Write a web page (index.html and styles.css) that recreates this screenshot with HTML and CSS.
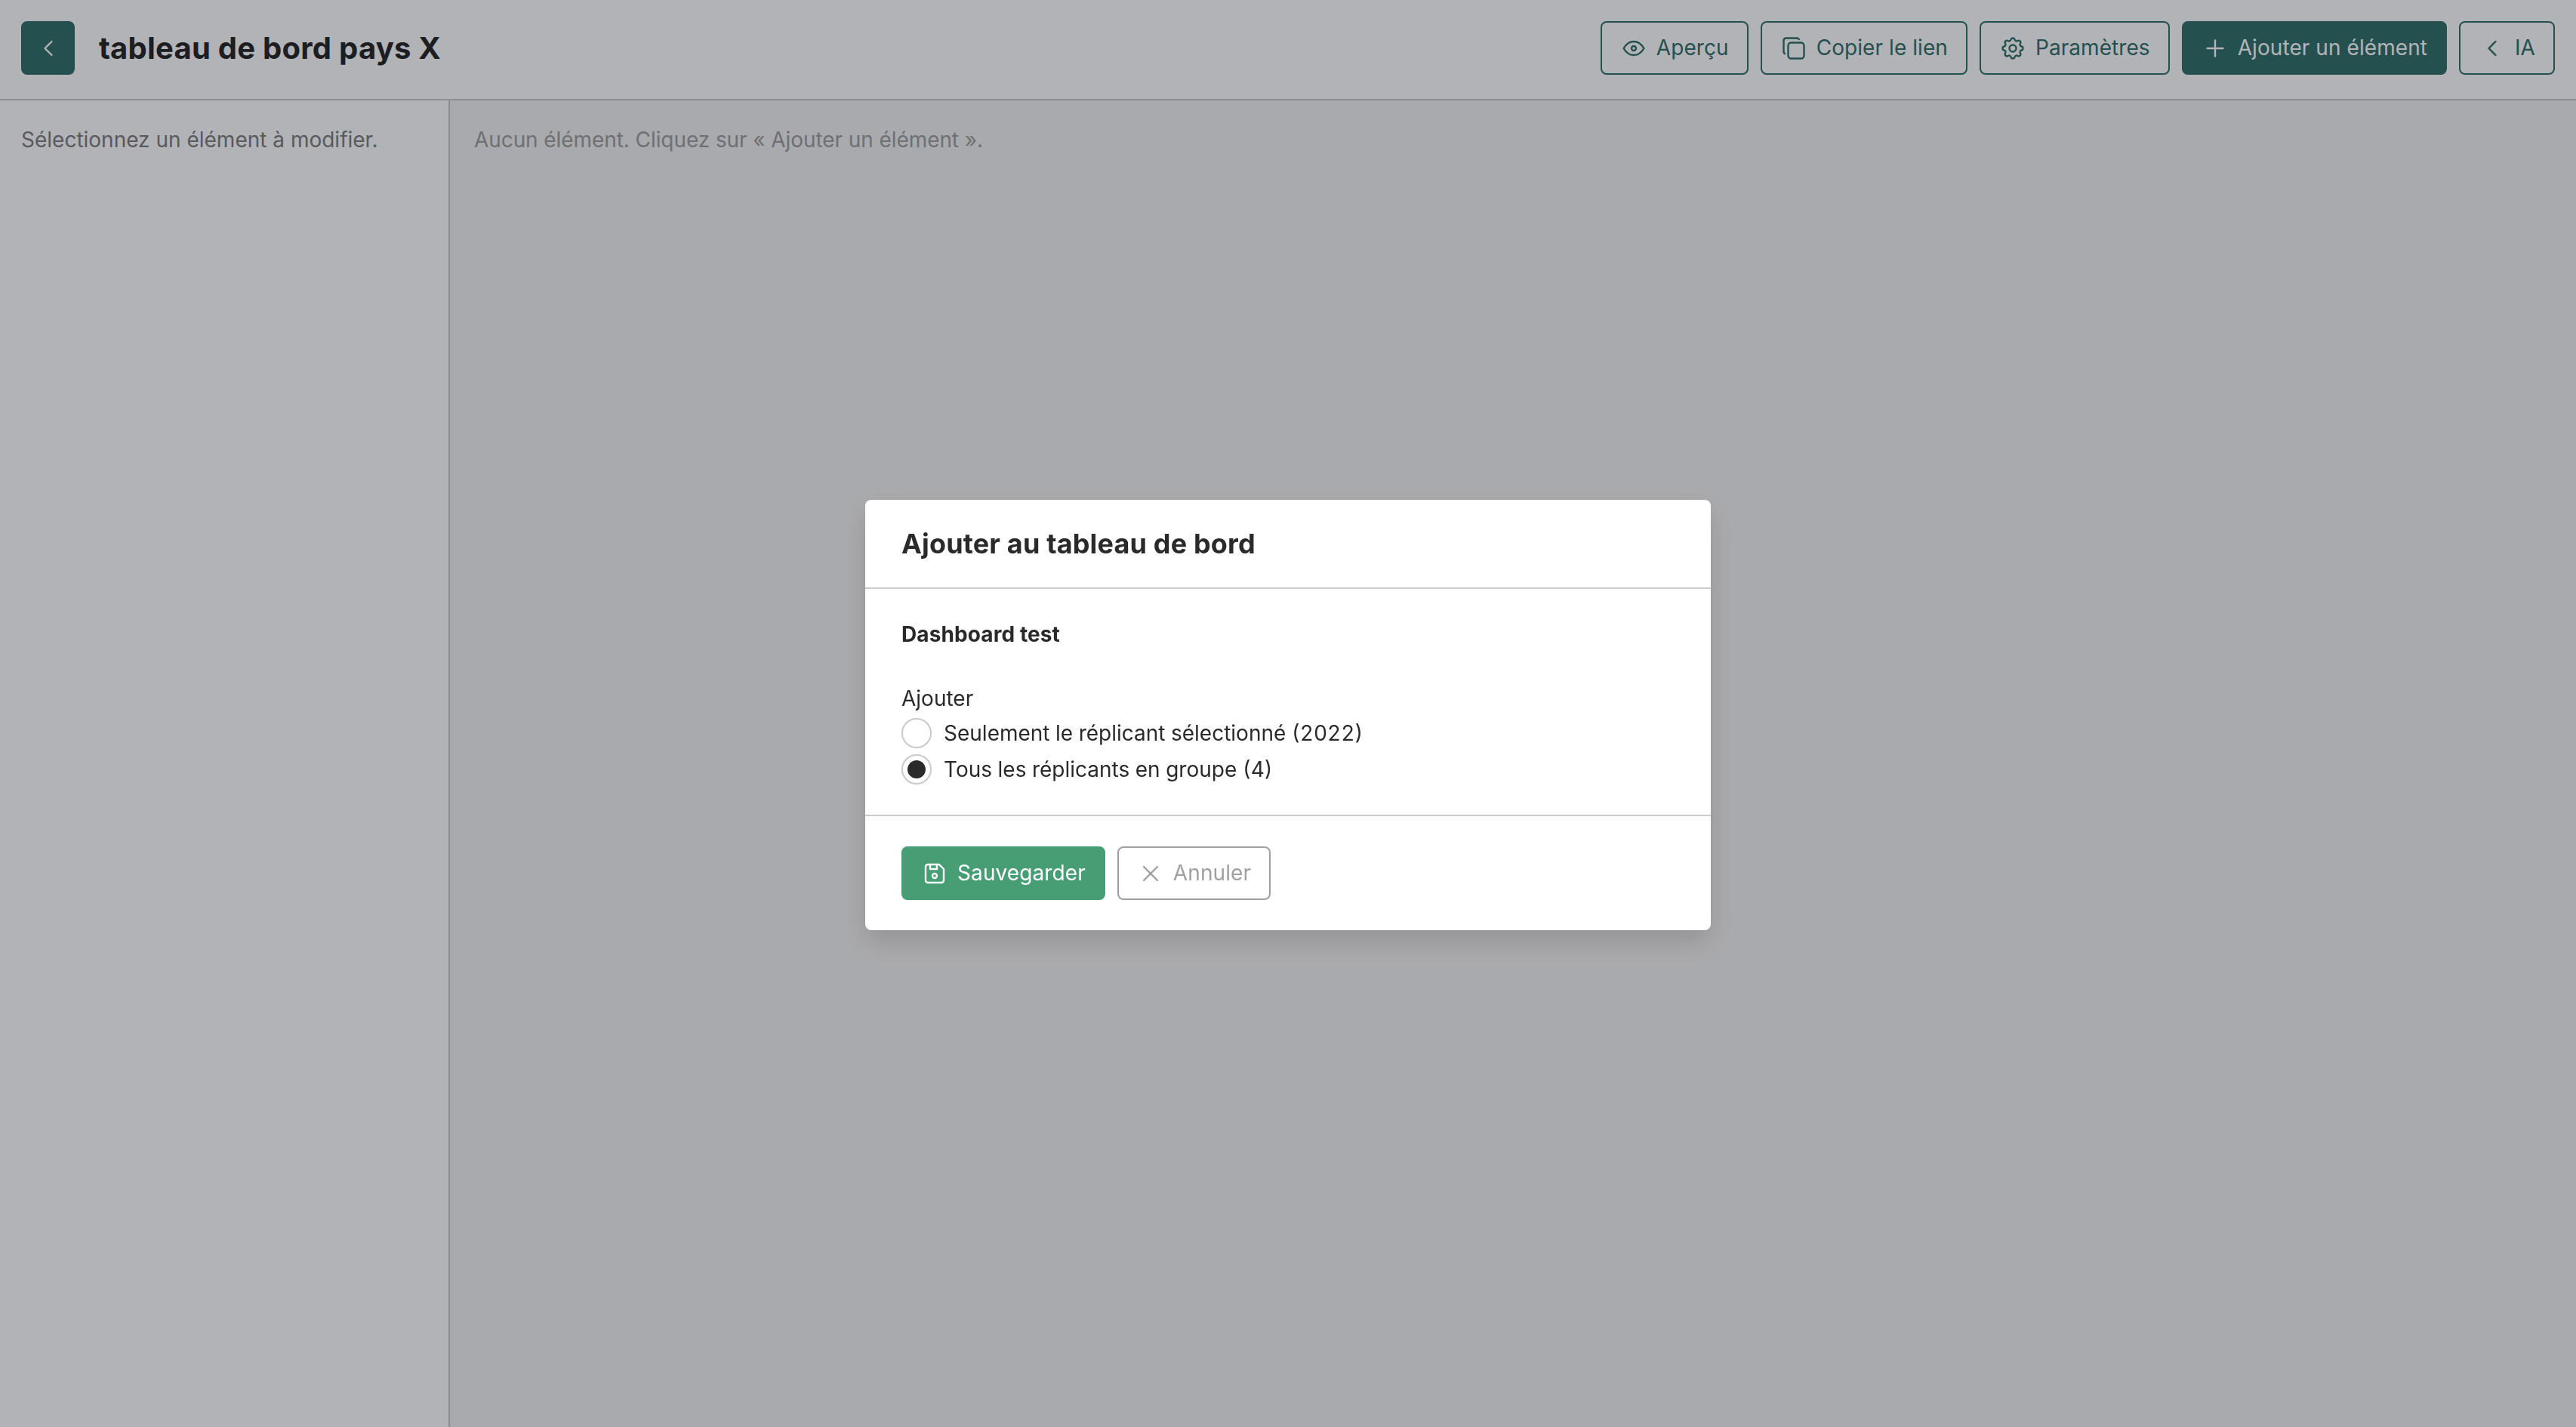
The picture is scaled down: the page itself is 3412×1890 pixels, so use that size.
FILE: index.html
```html
<!DOCTYPE html>
<html lang="fr">
<head>
    <meta charset="UTF-8">
    <meta name="viewport" content="width=device-width, initial-scale=1.0">
    <title>tableau de bord pays X</title>
    <link rel="stylesheet" href="styles.css">
</head>
<body>
    <div class="page">
        <header class="header">
            <button class="btn btn-primary btn-square" aria-label="Retour">
                <svg class="icon" viewBox="0 0 24 24"><path d="M15 6l-6 6l6 6"/></svg>
            </button>
            <h1>tableau de bord pays X</h1>
            <div class="actions">
                <button class="btn btn-outline">
                    <svg class="icon" viewBox="0 0 24 24">
                        <path d="M10 12a2 2 0 1 0 4 0a2 2 0 0 0 -4 0"/>
                        <path d="M21 12c-2.4 4 -5.4 6 -9 6c-3.6 0 -6.6 -2 -9 -6c2.4 -4 5.4 -6 9 -6c3.6 0 6.6 2 9 6"/>
                    </svg>
                    Aperçu
                </button>
                <button class="btn btn-outline">
                    <svg class="icon" viewBox="0 0 24 24">
                        <path d="M7 9.667a2.667 2.667 0 0 1 2.667 -2.667h8.666a2.667 2.667 0 0 1 2.667 2.667v8.666a2.667 2.667 0 0 1 -2.667 2.667h-8.666a2.667 2.667 0 0 1 -2.667 -2.667z"/>
                        <path d="M4.012 16.737a2.005 2.005 0 0 1 -1.012 -1.737v-10c0 -1.1 .9 -2 2 -2h10c.75 0 1.158 .385 1.5 1"/>
                    </svg>
                    Copier le lien
                </button>
                <button class="btn btn-outline">
                    <svg class="icon" viewBox="0 0 24 24">
                        <path d="M10.325 4.317c.426 -1.756 2.924 -1.756 3.35 0a1.724 1.724 0 0 0 2.573 1.066c1.543 -.94 3.31 .826 2.37 2.37a1.724 1.724 0 0 0 1.065 2.572c1.756 .426 1.756 2.924 0 3.35a1.724 1.724 0 0 0 -1.066 2.573c.94 1.543 -.826 3.31 -2.37 2.37a1.724 1.724 0 0 0 -2.572 1.065c-.426 1.756 -2.924 1.756 -3.35 0a1.724 1.724 0 0 0 -2.573 -1.066c-1.543 .94 -3.31 -.826 -2.37 -2.37a1.724 1.724 0 0 0 -1.065 -2.572c-1.756 -.426 -1.756 -2.924 0 -3.35a1.724 1.724 0 0 0 1.066 -2.573c-.94 -1.543 .826 -3.31 2.37 -2.37c1 .608 2.296 .07 2.572 -1.065"/>
                        <path d="M9 12a3 3 0 1 0 6 0a3 3 0 0 0 -6 0"/>
                    </svg>
                    Paramètres
                </button>
                <button class="btn btn-primary">
                    <svg class="icon" viewBox="0 0 24 24"><path d="M12 5v14M5 12h14"/></svg>
                    Ajouter un élément
                </button>
                <button class="btn btn-outline">
                    <svg class="icon" viewBox="0 0 24 24"><path d="M15 6l-6 6l6 6"/></svg>
                    IA
                </button>
            </div>
        </header>

        <div class="main">
            <aside class="sidebar">Sélectionnez un élément à modifier.</aside>
            <main class="content">Aucun élément. Cliquez sur « Ajouter un élément ».</main>
        </div>
    </div>

    <div class="overlay">
        <div class="modal" role="dialog">
            <div class="modal-header">
                <h2>Ajouter au tableau de bord</h2>
            </div>
            <div class="modal-body">
                <div class="item-name">Dashboard test</div>
                <div class="field-label">Ajouter</div>
                <div class="radio-group">
                    <label class="radio">
                        <input type="radio" name="mode">
                        Seulement le réplicant sélectionné (2022)
                    </label>
                    <label class="radio">
                        <input type="radio" name="mode" checked>
                        Tous les réplicants en groupe (4)
                    </label>
                </div>
            </div>
            <div class="modal-footer">
                <button class="btn btn-success">
                    <svg class="icon" viewBox="0 0 24 24">
                        <path d="M6 4h10l4 4v10a2 2 0 0 1 -2 2h-12a2 2 0 0 1 -2 -2v-12a2 2 0 0 1 2 -2"/>
                        <path d="M10 14a2 2 0 1 0 4 0a2 2 0 1 0 -4 0"/>
                        <path d="M14 4v4h-6v-4"/>
                    </svg>
                    Sauvegarder
                </button>
                <button class="btn btn-neutral">
                    <svg class="icon" viewBox="0 0 24 24"><path d="M18 6l-12 12M6 6l12 12"/></svg>
                    Annuler
                </button>
            </div>
        </div>
    </div>
</body>
</html>
```
FILE: styles.css
```css
* {
    box-sizing: border-box;
}
body {
    margin: 0;
    font-family: Inter, sans-serif;
    font-size: 28px;
    line-height: 1.4;
    color: #2a2a2a;
    background-color: #fff;
}
h1, h2 {
    margin: 0;
    font-weight: 700;
    line-height: 1;
}
.page {
    display: flex;
    flex-direction: column;
    height: 100vh;
}
.header {
    display: flex;
    align-items: center;
    height: 133px;
    padding: 28px 28px 32px;
    border-bottom: 2px solid #cacaca;
}
h1 {
    margin-left: 32px;
    font-size: 40px;
    letter-spacing: 0.24px;
}
.actions {
    display: flex;
    gap: 16px;
    margin-left: auto;
}
.main {
    display: flex;
    flex: 1;
}
.sidebar {
    width: 596px;
    padding: 33px 28px;
    border-right: 2px solid #cacaca;
    color: #808080;
}
.content {
    flex: 1;
    padding: 33px 32px;
    background-color: #f2f2f2;
    color: #a0a0a0;
    letter-spacing: -0.08px;
}

/* buttons */
.btn {
    display: flex;
    align-items: center;
    gap: 12px;
    height: 71px;
    padding: 1px 24px 0;
    border: 2px solid transparent;
    border-radius: 8px;
    background-color: transparent;
    font: inherit;
    letter-spacing: 0.07px;
    white-space: nowrap;
}
.btn-square {
    justify-content: center;
    width: 71px;
    padding: 1px 0 0;
}
.btn-primary {
    background-color: #35726d;
    border-color: #35726d;
    color: #fff;
}
.btn-outline {
    border-color: #35726d;
    color: #35726d;
}
.btn-success {
    background-color: #479e74;
    border-color: #479e74;
    color: #fff;
}
.btn-neutral {
    border-color: #a0a0a0;
    color: #a0a0a0;
}
.icon {
    flex: none;
    width: 36px;
    height: 36px;
    fill: none;
    stroke: currentColor;
    stroke-width: 1.6;
    stroke-linecap: round;
    stroke-linejoin: round;
}

/* modal */
.overlay {
    position: fixed;
    inset: 0;
    display: flex;
    align-items: center;
    justify-content: center;
    padding-top: 4px;
    background-color: rgba(0, 4, 14, 0.3);
}
.modal {
    width: 1120px;
    border-radius: 8px;
    background-color: #fff;
    box-shadow: 0 16px 34px -4px rgba(0, 0, 0, 0.15);
}
.modal-header {
    padding: 40px 48px;
    border-bottom: 2px solid #cacaca;
}
.modal-header h2 {
    font-size: 36px;
    letter-spacing: 0.16px;
}
.modal-body {
    height: 299px;
    padding: 41px 48px 39px;
}
.item-name {
    margin-bottom: 46px;
    font-weight: 700;
    letter-spacing: 0.1px;
}
.field-label {
    margin-bottom: 6px;
}
.radio-group {
    display: flex;
    flex-direction: column;
    gap: 8px;
}
.radio {
    display: flex;
    align-items: center;
    gap: 16px;
    height: 40px;
    font-variant-numeric: tabular-nums;
}
.radio input {
    appearance: none;
    display: grid;
    place-items: center;
    width: 40px;
    height: 40px;
    margin: 0;
    border: 2px solid #cacaca;
    border-radius: 50%;
}
.radio input:checked::before {
    content: "";
    width: 24px;
    height: 24px;
    border-radius: 50%;
    background-color: #2a2a2a;
}
.modal-footer {
    display: flex;
    gap: 16px;
    padding: 40px 48px;
    border-top: 2px solid #cacaca;
}
.modal-footer .btn {
    letter-spacing: 0.1px;
}
```
